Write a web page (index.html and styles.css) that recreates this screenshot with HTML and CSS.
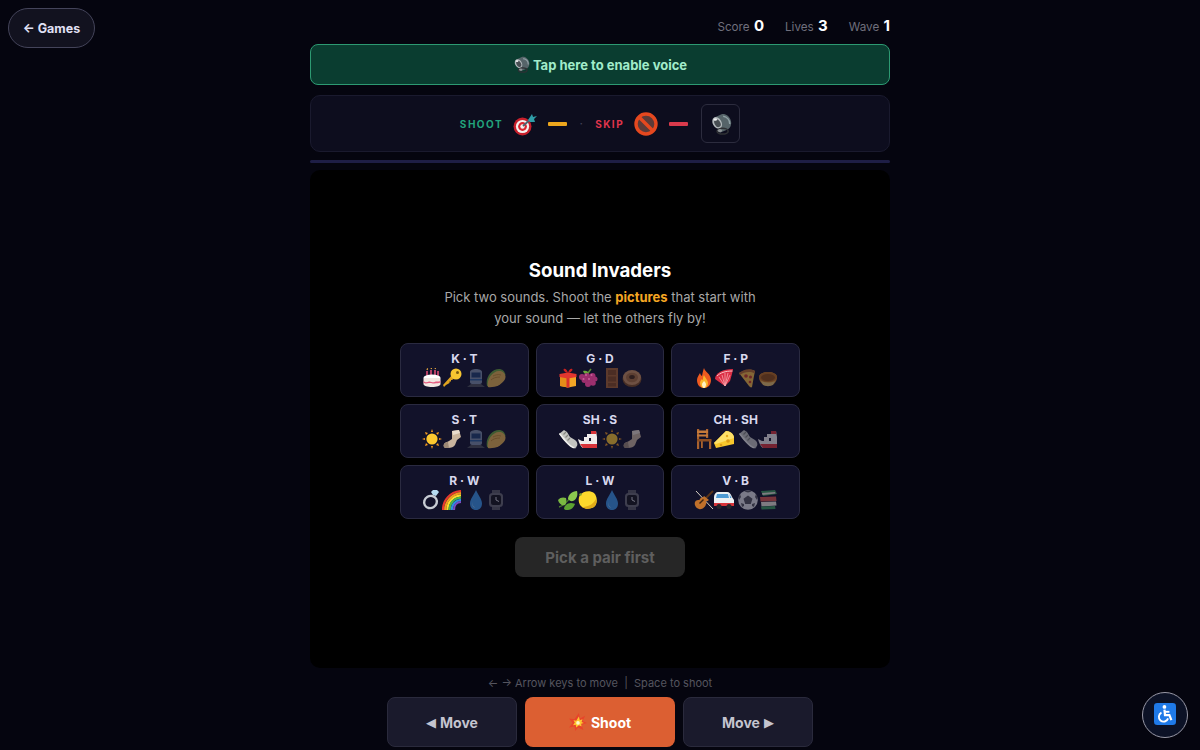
FILE: index.html
```html
<!DOCTYPE html>
<html lang="en">
<head>
    <meta charset="UTF-8">
    <meta name="viewport" content="width=device-width, initial-scale=1.0">
    <title>Sound Invaders</title>
    <link rel="stylesheet" href="styles.css">
</head>
<body>
    <svg class="sprites" xmlns="http://www.w3.org/2000/svg">
        <symbol id="speaker" viewBox="0 0 20 20">
            <path d="M4 4l7-3c3-.5 7 2 8 6s-1 7-3 8l-7 3z" fill="#566469"/>
            <path d="M12 3c3 .5 6 3 6 7" stroke="#8fa0a5" stroke-width="1.400" fill="none"/>
            <ellipse cx="6.500" cy="9" rx="4" ry="5.600" transform="rotate(-30 6.500 9)" fill="#b4babd"/>
            <ellipse cx="6.800" cy="9.300" rx="2.600" ry="3.800" transform="rotate(-30 6.800 9.300)" fill="#474d52"/>
            <ellipse cx="4.800" cy="6" rx="1.600" ry="1.100" fill="#f0f1f2"/>
            <ellipse cx="11.500" cy="16.500" rx="5" ry="2.600" fill="none" stroke="#2e3034" stroke-width="1.500"/>
            <ellipse cx="9" cy="16" rx="2" ry="1.400" fill="#8f9497"/>
        </symbol>
        <symbol id="target" viewBox="0 0 24 24">
            <circle cx="9.500" cy="14.500" r="9" fill="#c8202c"/>
            <circle cx="9.500" cy="14.500" r="6.600" fill="#f5f0ee"/>
            <circle cx="9.500" cy="14.500" r="4.400" fill="#d9252f"/>
            <circle cx="9.500" cy="14.500" r="2.200" fill="#f5f0ee"/>
            <path d="M10 14L20 5" stroke="#4d6470" stroke-width="1.800"/>
            <path d="M15 8l4-6 1 3 4-1-3 3 1 3-5 0z" fill="#2f9ea8"/>
        </symbol>
        <symbol id="noentry" viewBox="0 0 24 24">
            <circle cx="12" cy="12" r="10" fill="#5c3b38" stroke="#e5481f" stroke-width="3.400"/>
            <path d="M5 5l14 14" stroke="#e5481f" stroke-width="3.400"/>
        </symbol>
        <symbol id="cake" viewBox="0 0 20 20">
            <path d="M5 3v6M9 2v7M13 2v7M16 3v6" stroke="#e8507a" stroke-width="1.500"/>
            <path d="M5 2l.6-1.600M9 1l.6-1M13 1l.6-1" stroke="#f5b342" stroke-width="1.200"/>
            <ellipse cx="10" cy="9.500" rx="8.500" ry="3" fill="#fff"/>
            <path d="M1.500 10v6c0 1.800 3.800 3 8.500 3s8.500-1.200 8.500-3v-6z" fill="#f1e7e2"/>
            <path d="M1.500 13c2 2 4 1 5.500.5s4 1.500 5.500.5 4 0 6-1v1.500c-2 1-4 .5-6 1s-3-1-5.500-.5-3.500 1-5.500-.5z" fill="#e45b7f"/>
        </symbol>
        <symbol id="key" viewBox="0 0 20 20">
            <path d="M2 19l-1-2L11 6l3 3-2 2-1-.5-.5 1.500-1.500 0 0 1.500-1.500 0 0 1.500L4 17z" fill="#e0a31f"/>
            <circle cx="14" cy="6" r="5.500" fill="#f7c531"/>
            <circle cx="15.500" cy="4.500" r="1.500" fill="#7a5a10"/>
        </symbol>
        <symbol id="train" viewBox="0 0 20 20">
            <path d="M4 4c0-2 3-3 6-3s6 1 6 3v10c0 1-1 2-2 2H6c-1 0-2-1-2-2z" fill="#7e8fa8"/>
            <path d="M5.500 4.500h9v5h-9z" fill="#1f3f6e"/>
            <path d="M4 11h12v1.500H4z" fill="#2b5d9b"/>
            <path d="M1 19l4-3h10l4 3z" fill="#4c4f57"/>
        </symbol>
        <symbol id="taco" viewBox="0 0 20 20">
            <path d="M1 18C-1 9 6 1 13 1c3 0 6 2 6.500 6-4 1-9 4-12 11-2 1-5 1-6.500 0z" fill="#6aa33a"/>
            <path d="M2 19C0 11 7 3 13 3c3.500 0 6 2 6.500 5.500.5 4-6 9.500-11 10.300-2.500.4-5 .7-6.500.2z" fill="#e6b24f"/>
            <path d="M7 8c2-1 5-2 8-1M5 12c2-2 5-3 9-3" stroke="#bd8428" stroke-width=".9" fill="none"/>
        </symbol>
        <symbol id="gift" viewBox="0 0 20 20">
            <path d="M2 7l8-1 8 1v11l-8 1.500L2 18z" fill="#f2a526"/>
            <path d="M2 7l8 1.500V19.500L2 18z" fill="#e58c19"/>
            <path d="M8.500 6.500h3v13h-3z" fill="#d9302c"/>
            <path d="M1.500 6l8.500-1.500L18.500 6v3L10 10.500 1.500 9z" fill="#e2362f"/>
            <path d="M10 5C7 5 4.500 1.500 6 .8S9.500 2.500 10 5c.5-2.500 2.500-4.900 4-4.200S13 5 10 5z" fill="#c9201f"/>
        </symbol>
        <symbol id="grapes" viewBox="0 0 20 20">
            <path d="M10 5l3-4" stroke="#5a8d33" stroke-width="1.500"/>
            <path d="M5 3c3-1 5 0 6 3-3 1-5 0-6-3z" fill="#6ba83c"/>
            <g fill="#9c2f6e">
                <circle cx="4" cy="9" r="3"/><circle cx="9" cy="8" r="3"/><circle cx="14.500" cy="8" r="3"/><circle cx="17" cy="11" r="2.500"/>
                <circle cx="6.500" cy="12" r="3"/><circle cx="12" cy="12" r="3"/><circle cx="15" cy="15" r="2.800"/>
                <circle cx="10" cy="16" r="3"/>
            </g>
            <g fill="#c95f9a"><circle cx="8" cy="7" r="1"/><circle cx="13.500" cy="7" r="1"/><circle cx="5.500" cy="11" r="1"/><circle cx="11" cy="11" r="1"/></g>
        </symbol>
        <symbol id="door" viewBox="0 0 20 20">
            <path d="M4 0h12v20H4z" fill="#a8632f"/>
            <path d="M6 2h8v5H6zM6 8.500h8v5H6zM6 15h8v3.500H6z" fill="#84491f"/>
        </symbol>
        <symbol id="donut" viewBox="0 0 20 20">
            <ellipse cx="10" cy="11" rx="9.500" ry="8" fill="#7c4a22"/>
            <ellipse cx="10" cy="9.500" rx="9" ry="7.500" fill="#c98f5c"/>
            <ellipse cx="10" cy="9.500" rx="6" ry="4.800" fill="#a86c3a"/>
            <ellipse cx="10" cy="9" rx="2.800" ry="2" fill="#4a2a14"/>
        </symbol>
        <symbol id="fire" viewBox="0 0 20 20">
            <path d="M10 0c1 4 7 6 7 12 0 5-3 8-7 8s-7-3-7-8c0-3 2-5 3-7 .5 1.500 1 2.500 2 3 .5-3 1-5 2-8z" fill="#ef5a1f"/>
            <path d="M10 7c1 3 4 5 4 8 0 3-2 5-4 5s-4-2-4-5c0-2 1-3 2-4 .5 1 1 1 1 1 0-2 0-3 1-5z" fill="#fbb62b"/>
            <path d="M10 13c1 1 2 2 2 3.500S11 20 10 20s-2-2-2-3.500 1-2 2-3.500z" fill="#fff3c4"/>
        </symbol>
        <symbol id="fan" viewBox="0 0 20 20">
            <path d="M1 11C1 5 9 1 19 1l-1 5-2 7-5 5-3-2z" fill="#dc2f45"/>
            <path d="M11 18L5 9M11 18L8 7M11 18l0-13M11 18l3-13M11 18l5-11" stroke="#f6a5ac" stroke-width=".8"/>
            <path d="M3 8C6 5 11 3 18.500 3" stroke="#f7c0c4" stroke-width="1" fill="none"/>
        </symbol>
        <symbol id="pizza" viewBox="0 0 20 20">
            <path d="M1 5c5-3 10-4 14-3l2 1-1 5-2 11c-1 1-2 0-3-1z" fill="#f5b942"/>
            <path d="M1 5c5-4 11-5 16-2l-.5 2.500C12 3 6 4 1.800 7z" fill="#b86b2a"/>
            <circle cx="8" cy="8" r="1.800" fill="#cb3a26"/><circle cx="12.500" cy="9" r="1.500" fill="#cb3a26"/><circle cx="12" cy="14" r="1.300" fill="#cb3a26"/>
        </symbol>
        <symbol id="pie" viewBox="0 0 20 20">
            <path d="M1 9c0-3 4-5 9-5s9 2 9 5c0 5-4 9-9 9s-9-4-9-9z" fill="#d98b27"/>
            <ellipse cx="10" cy="9" rx="9" ry="5" fill="#b86a1c"/>
            <ellipse cx="10" cy="9.500" rx="7" ry="3.500" fill="#8e4c12"/>
            <path d="M3 13c4 2 10 2 14 0l-2 4c-3 1.500-7 1.500-10 0z" fill="#e7c06a"/>
        </symbol>
        <symbol id="sun" viewBox="0 0 20 20">
            <circle cx="10" cy="10" r="5.600" fill="#fdc82f"/>
            <path d="M10 0l1 3H9zM10 20l-1-3h2zM0 10l3-1v2zM20 10l-3 1V9zM3 3l3 1-2 2zM17 17l-3-1 2-2zM17 3l-1 3-2-2zM3 17l1-3 2 2z" fill="#f79a1e"/>
        </symbol>
        <symbol id="sock" viewBox="0 0 20 20">
            <path d="M10 2l7-1 2 7-4 3-2 5c-1 2-4 3-7 3H4c-2 0-3-2-2-4 1-1.500 3-2 5-3l3-2z" fill="#c9b49d"/>
            <path d="M10 2l7-1 1 3-7 2z" fill="#e8dccd"/>
            <path d="M2 15c1-1.500 3-2 4-2l1 6H4c-2 0-3-2-2-4z" fill="#9c8874"/>
        </symbol>
        <symbol id="shoe" viewBox="0 0 20 20">
            <path d="M1 5l5-4 3 2 3 5 5 3c2 1.500 3 4 2 6-1 1.500-3 2-5 1-3-1.500-6-5-9-8z" fill="#c3c4c0"/>
            <path d="M1 5l4.500 6c3 3.500 6 6.800 9 8 1.500.6 3 .5 4-.5-3 0-6-2-9-5.500L2 4z" fill="#f0f0ec"/>
            <path d="M8 3L5.500 5.500M10 6L7.500 8.500M12 9l-2.500 2.500" stroke="#85867f" stroke-width="1.200"/>
        </symbol>
        <symbol id="ship" viewBox="0 0 20 20">
            <path d="M0 10l4 2h9V2h5l1 6v11H5c-2-1-4-5-5-9z" fill="#f0eceb"/>
            <path d="M6 8h5v4H6zM9 5h4v4H9z" fill="#f0eceb"/>
            <path d="M2 15h17v4H5z" fill="#d8343a"/>
            <path d="M13 2h5l.4 3H13z" fill="#d8343a"/>
        </symbol>
        <symbol id="chair" viewBox="0 0 20 20">
            <path d="M3 0h2.200v20H3zM12 0h2.200v9H12zM15 11h2.200v9H15zM7 12h1.800v7H7z" fill="#a9622e"/>
            <path d="M3 1.500h11v2.500H3zM3 5.500h11v2H3z" fill="#c57a3a"/>
            <path d="M3 10h14.500v2.500H3z" fill="#8b4d22"/>
        </symbol>
        <symbol id="cheese" viewBox="0 0 20 20">
            <path d="M0 14L12 2c4 0 8 3 8 7v6L2 19z" fill="#f8c72c"/>
            <path d="M0 14L12 2c4 0 8 3 8 7L2 15z" fill="#fde068"/>
            <circle cx="14" cy="12" r="1.800" fill="#dd9d16"/><circle cx="7" cy="16" r="1.300" fill="#dd9d16"/><circle cx="13" cy="7" r="1.200" fill="#e3a91e"/>
        </symbol>
        <symbol id="ring" viewBox="0 0 20 20">
            <path d="M11 0h4l2 2-3 4-3-1-2-3z" fill="#b6dcf2"/>
            <ellipse cx="8.500" cy="12" rx="6.500" ry="6" fill="none" stroke="#c7ccd4" stroke-width="2.400" transform="rotate(-30 8.500 12)"/>
        </symbol>
        <symbol id="rainbow" viewBox="0 0 20 20">
            <g fill="none" stroke-width="2.200">
                <path d="M1 20C1 10 8 2 19 1" stroke="#e5392f"/>
                <path d="M3.200 20C3.200 11 10 4 19 3.200" stroke="#f49a1f"/>
                <path d="M5.400 20C5.400 12 11 6 19 5.400" stroke="#fbdc2c"/>
                <path d="M7.600 20C7.600 13 12 8 19 7.600" stroke="#4bb54a"/>
                <path d="M9.800 20C9.800 14 14 10 19 9.800" stroke="#2d8fe0"/>
                <path d="M12 20C12 15 15 12 19 12" stroke="#7b4bc4"/>
            </g>
        </symbol>
        <symbol id="drop" viewBox="0 0 20 20">
            <path d="M10 0c2 5 6 9 6 13.500S13 20 10 20s-6-2-6-6.500S8 5 10 0z" fill="#3a96ea"/>
            <path d="M7 12c-1 3 .5 5 2.500 5.500C7 18 5.500 15 7 12z" fill="#9ad0f6"/>
        </symbol>
        <symbol id="watch" viewBox="0 0 20 20">
            <path d="M6 0h8v4H6zM6 16h8v4H6z" fill="#5a5a62"/>
            <rect x="3" y="3" width="14" height="14" rx="3.500" fill="#6a6a72"/>
            <rect x="5" y="5" width="10" height="10" rx="2" fill="#15151a"/>
            <path d="M10 10V7M10 10l3 1.500" stroke="#d5d5da" stroke-width="1"/>
        </symbol>
        <symbol id="leaf" viewBox="0 0 20 20">
            <path d="M1 17c4-1 8-4 13-12" stroke="#4a7d2b" stroke-width="1.300" fill="none"/>
            <path d="M0 10c2-3 6-3 8-2 1 3 0 6-1 7-3 1-6-1-7-5z" fill="#7bb942"/>
            <path d="M6 19c0-3 3-6 7-6 2 0 4 1 4 1-1 3-4 6-7 6-2 0-3 0-4-1z" fill="#5da232"/>
            <path d="M10 9c0-4 4-8 9-8 1 4 0 8-4 10-2 .5-4-.5-5-2z" fill="#8cc84f"/>
        </symbol>
        <symbol id="lemon" viewBox="0 0 20 20">
            <path d="M2 5C5 1 12 0 16 3c3 3 4 9 1 13-3 3-9 4-13 1C0 14 0 8 2 5z" fill="#fcd92c"/>
            <path d="M17 16c-3 3-9 4-13 1 5 0 11-2 14-8 .8 2 .4 5-1 7z" fill="#e0ab18"/>
            <path d="M1 4l2-1 1 2-2 1z" fill="#83a531"/>
        </symbol>
        <symbol id="violin" viewBox="0 0 20 20">
            <path d="M2 1l17 18" stroke="#d9d1c5" stroke-width="1"/>
            <path d="M19 1l-8 8" stroke="#5a3418" stroke-width="2"/>
            <path d="M10 6l5 4c-1 1-2 1-3 1 0 1 1 2 0 3-.5 3-4 6-7 5s-5-4-4-7c1-2 3-2 4-2 1 0 1-2 2-2 1-1 2 0 3-2z" fill="#c0702a"/>
            <path d="M5 13l4-4 1 1-4 4z" fill="#3e2410"/>
        </symbol>
        <symbol id="van" viewBox="0 0 20 20">
            <path d="M0 7c0-3 2-5 4-5h9c2.500 0 4 2 5 5l2 3v6H0z" fill="#eef1f3"/>
            <path d="M3 4h11l1 4H2z" fill="#4f9bd4"/>
            <path d="M15.500 4l2 4h-1.500z" fill="#4f9bd4"/>
            <path d="M0 13h20v3H0z" fill="#d8343a"/>
            <circle cx="5" cy="16.500" r="2.500" fill="#25252a"/><circle cx="15" cy="16.500" r="2.500" fill="#25252a"/>
        </symbol>
        <symbol id="ball" viewBox="0 0 20 20">
            <circle cx="10" cy="10" r="9.800" fill="#e2e2e6"/>
            <path d="M10 5.500l4.500 3.200-1.700 5.300H7.200L5.500 8.700zM6 1.500l4 1 4-1-4-1zM1 10l2-3-1-3-1 2zM19 10l-2-3 1-3 1 2zM4 17l2-1 0-2-3-1zM16 17l-2-1 0-2 3-1z" fill="#55555c"/>
        </symbol>
        <symbol id="books" viewBox="0 0 20 20">
            <path d="M3 1l14-1 2 4-14 2z" fill="#3c9a5c"/>
            <path d="M4 3l13-1 .5 1.500-13 1.500z" fill="#e9e4d8"/>
            <path d="M2 7l16-.5.500 4.500-16 .5z" fill="#d9574c"/>
            <path d="M3 12l15-.5.500 4-15 1z" fill="#e9e4d8"/>
            <path d="M3 16.500l14-.5.500 3-14 .5z" fill="#3c9a5c"/>
        </symbol>
        <symbol id="boom" viewBox="0 0 20 20">
            <path d="M11 0l1 6 6-3-3 6 5 2-6 2 2 6-6-3-3 4-1-5-6 1 4-5-4-5 6 1z" fill="#e8442a"/>
            <path d="M11 4l1 4 3-1-1 3 2.500 1-3 1 .5 3-3-1.500L8 16l-.5-3-3 .5 2-3L5 8l3 .5z" fill="#fdc72f"/>
            <circle cx="10" cy="11" r="2" fill="#fff7d0"/>
        </symbol>
        <symbol id="wheelchair" viewBox="0 0 20 20">
            <rect width="20" height="20" rx="3" fill="#1f7ae8"/>
            <circle cx="9.500" cy="3.600" r="1.700" fill="#fff"/>
            <path d="M9.500 6l.5 5h4l1.800 4.500" stroke="#fff" stroke-width="2" fill="none"/>
            <path d="M10 8h4" stroke="#fff" stroke-width="1.700"/>
            <path d="M6.800 8.800a4.300 4.300 0 1 0 6 5.200" stroke="#fff" stroke-width="1.700" fill="none"/>
        </symbol>
    </svg>

    <a class="back-btn" href="#">← Games</a>

    <div class="game">
        <div class="stats">
            <span class="stat">Score <b>0</b></span>
            <span class="stat">Lives <b>3</b></span>
            <span class="stat">Wave <b>1</b></span>
        </div>

        <div class="voice-banner">
            <svg class="emoji"><use href="#speaker"/></svg>
            <span>Tap here to enable voice</span>
        </div>

        <div class="legend">
            <span class="legend-label shoot">SHOOT</span>
            <svg class="legend-icon"><use href="#target"/></svg>
            <span class="dash dash-shoot"></span>
            <span class="legend-dot">·</span>
            <span class="legend-label skip">SKIP</span>
            <svg class="legend-icon"><use href="#noentry"/></svg>
            <span class="dash dash-skip"></span>
            <button class="sound-btn"><svg class="emoji big"><use href="#speaker"/></svg></button>
        </div>

        <div class="progress"></div>

        <div class="canvas">
            <h2 class="title">Sound Invaders</h2>
            <p class="intro">Pick two sounds. Shoot the <b>pictures</b> that start with<br>your sound — let the others fly by!</p>

            <div class="pairs">
                <div class="pair">
                    <div class="pair-name">K · T</div>
                    <div class="pair-pics">
                        <svg class="pic"><use href="#cake"/></svg><svg class="pic"><use href="#key"/></svg>
                        <span class="dim"><svg class="pic"><use href="#train"/></svg><svg class="pic"><use href="#taco"/></svg></span>
                    </div>
                </div>
                <div class="pair">
                    <div class="pair-name">G · D</div>
                    <div class="pair-pics">
                        <svg class="pic"><use href="#gift"/></svg><svg class="pic"><use href="#grapes"/></svg>
                        <span class="dim"><svg class="pic"><use href="#door"/></svg><svg class="pic"><use href="#donut"/></svg></span>
                    </div>
                </div>
                <div class="pair">
                    <div class="pair-name">F · P</div>
                    <div class="pair-pics">
                        <svg class="pic"><use href="#fire"/></svg><svg class="pic"><use href="#fan"/></svg>
                        <span class="dim"><svg class="pic"><use href="#pizza"/></svg><svg class="pic"><use href="#pie"/></svg></span>
                    </div>
                </div>
                <div class="pair">
                    <div class="pair-name">S · T</div>
                    <div class="pair-pics">
                        <svg class="pic"><use href="#sun"/></svg><svg class="pic"><use href="#sock"/></svg>
                        <span class="dim"><svg class="pic"><use href="#train"/></svg><svg class="pic"><use href="#taco"/></svg></span>
                    </div>
                </div>
                <div class="pair">
                    <div class="pair-name">SH · S</div>
                    <div class="pair-pics">
                        <svg class="pic"><use href="#shoe"/></svg><svg class="pic"><use href="#ship"/></svg>
                        <span class="dim"><svg class="pic"><use href="#sun"/></svg><svg class="pic"><use href="#sock"/></svg></span>
                    </div>
                </div>
                <div class="pair">
                    <div class="pair-name">CH · SH</div>
                    <div class="pair-pics">
                        <svg class="pic"><use href="#chair"/></svg><svg class="pic"><use href="#cheese"/></svg>
                        <span class="dim"><svg class="pic"><use href="#shoe"/></svg><svg class="pic"><use href="#ship"/></svg></span>
                    </div>
                </div>
                <div class="pair">
                    <div class="pair-name">R · W</div>
                    <div class="pair-pics">
                        <svg class="pic"><use href="#ring"/></svg><svg class="pic"><use href="#rainbow"/></svg>
                        <span class="dim"><svg class="pic"><use href="#drop"/></svg><svg class="pic"><use href="#watch"/></svg></span>
                    </div>
                </div>
                <div class="pair">
                    <div class="pair-name">L · W</div>
                    <div class="pair-pics">
                        <svg class="pic"><use href="#leaf"/></svg><svg class="pic"><use href="#lemon"/></svg>
                        <span class="dim"><svg class="pic"><use href="#drop"/></svg><svg class="pic"><use href="#watch"/></svg></span>
                    </div>
                </div>
                <div class="pair">
                    <div class="pair-name">V · B</div>
                    <div class="pair-pics">
                        <svg class="pic"><use href="#violin"/></svg><svg class="pic"><use href="#van"/></svg>
                        <span class="dim"><svg class="pic"><use href="#ball"/></svg><svg class="pic"><use href="#books"/></svg></span>
                    </div>
                </div>
            </div>

            <button class="start-btn" disabled>Pick a pair first</button>
        </div>

        <div class="hint">← → Arrow keys to move &nbsp;|&nbsp; Space to shoot</div>

        <div class="controls">
            <button class="ctrl move"><span class="tri">◀</span> Move</button>
            <button class="ctrl fire"><svg class="emoji boom"><use href="#boom"/></svg> Shoot</button>
            <button class="ctrl move">Move <span class="tri">▶</span></button>
        </div>
    </div>

    <button class="a11y-btn"><svg class="a11y-icon"><use href="#wheelchair"/></svg></button>
</body>
</html>
```

FILE: styles.css
```css
* {
    box-sizing: border-box;
}

html, body {
    height: 100%;
}

body {
    margin: 0;
    background-color: #05050f;
    color: #fff;
    font-family: Inter, "Liberation Sans", sans-serif;
    overflow: hidden;
}

.sprites {
    display: none;
}

.back-btn {
    position: absolute;
    left: 8px;
    top: 8px;
    width: 87px;
    height: 40px;
    display: flex;
    align-items: center;
    justify-content: center;
    border: 1px solid #44445a;
    border-radius: 20px;
    background: #12121f;
    color: #e0e0f5;
    font-size: 12.5px;
    font-weight: 700;
    text-decoration: none;
}

.game {
    width: 580px;
    margin: 0 auto;
    display: flex;
    flex-direction: column;
}

.stats {
    height: 44px;
    padding-top: 17px;
    display: flex;
    justify-content: flex-end;
    gap: 21px;
    font-size: 11.7px;
    line-height: 18px;
    color: #6f6f7c;
}

.stat b {
    margin-left: 1px;
    font-size: 15px;
    font-weight: 700;
    color: #fff;
}

.voice-banner {
    height: 41px;
    display: flex;
    align-items: center;
    justify-content: center;
    gap: 3px;
    border: 1px solid #2d9a72;
    border-radius: 8px;
    background: #0a3d30;
    color: #a2ecca;
    font-size: 13px;
    font-weight: 700;
}

.emoji {
    width: 17px;
    height: 17px;
}

.emoji.big {
    display: block;
    width: 22px;
    height: 22px;
}

.emoji.boom {
    width: 18px;
    height: 18px;
}

.legend {
    height: 57px;
    margin-top: 10px;
    display: flex;
    align-items: center;
    justify-content: center;
    border: 1px solid #1a1a2e;
    border-radius: 10px;
    background: #0d0d1e;
}

.legend-label {
    font-size: 10px;
    font-weight: 700;
    letter-spacing: 1.5px;
}

.legend-label.shoot {
    color: #22a37c;
}

.legend-label.skip {
    color: #e0354c;
}

.legend-icon {
    width: 24px;
    height: 24px;
    margin: 0 11px 0 10px;
}

.dash {
    width: 19px;
    height: 4px;
    border-radius: 1px;
}

.dash-shoot {
    background: #eda61d;
}

.dash-skip {
    background: #d93a4c;
}

.legend-dot {
    width: 28px;
    text-align: center;
    font-size: 12px;
    color: #44445a;
}

.sound-btn {
    width: 39px;
    height: 39px;
    margin-left: 13px;
    padding: 0;
    display: flex;
    align-items: center;
    justify-content: center;
    border: 1px solid #2c2c3e;
    border-radius: 6px;
    background: #0d0d1e;
}

.progress {
    height: 3px;
    margin-top: 8px;
    border-radius: 2px;
    background: #1e1e46;
}

.canvas {
    height: 498px;
    margin-top: 7px;
    padding-top: 89px;
    display: flex;
    flex-direction: column;
    align-items: center;
    border-radius: 10px;
    background: #000;
}

.title {
    margin: 0;
    font-size: 18.7px;
    line-height: 24px;
    font-weight: 700;
    color: #fff;
}

.intro {
    margin: 4px 0 0;
    text-align: center;
    font-size: 13px;
    line-height: 21px;
    color: #a8a8a8;
}

.intro b {
    color: #f5a623;
    font-weight: 700;
}

.pairs {
    width: 400px;
    margin-top: 14px;
    display: grid;
    grid-template-columns: repeat(3, 1fr);
    gap: 7px;
}

.pair {
    height: 54px;
    padding-top: 8px;
    border: 1px solid #2a2a40;
    border-radius: 8px;
    background: #12122a;
    text-align: center;
}

.pair-name {
    font-size: 12px;
    line-height: 14px;
    font-weight: 700;
    color: #d8d8ee;
}

.pair-pics {
    margin-top: 2px;
    display: flex;
    justify-content: center;
    align-items: center;
}

.pic {
    width: 20px;
    height: 20px;
    display: block;
}

.dim {
    display: flex;
    margin-left: 4px;
    opacity: 0.5;
}

.start-btn {
    width: 170px;
    height: 40px;
    margin-top: 18px;
    border: 0;
    border-radius: 8px;
    background: #262626;
    color: #5f5f5f;
    font-family: inherit;
    font-size: 15px;
    font-weight: 700;
}

.hint {
    margin-top: 8px;
    text-align: center;
    font-size: 11px;
    line-height: 14px;
    color: #55555f;
}

.controls {
    margin-top: 7px;
    display: flex;
    justify-content: center;
    gap: 8px;
}

.ctrl {
    height: 50px;
    display: flex;
    align-items: center;
    justify-content: center;
    gap: 4px;
    border-radius: 8px;
    font-family: inherit;
    font-size: 14px;
    font-weight: 700;
}

.ctrl.move {
    width: 130px;
    border: 1px solid #2a2a3c;
    background: #1a1a2c;
    color: #c4c4cf;
}

.ctrl.fire {
    width: 150px;
    border: 0;
    background: #dc5f32;
    color: #fff;
}

.tri {
    font-family: "DejaVu Sans", sans-serif;
    font-size: 13px;
}

.a11y-btn {
    position: fixed;
    right: 12px;
    bottom: 12px;
    width: 46px;
    height: 46px;
    padding: 0 0 2px;
    display: flex;
    align-items: center;
    justify-content: center;
    border: 1px solid #9a9aa8;
    border-radius: 50%;
    background: #0c1226;
}

.a11y-icon {
    width: 22px;
    height: 22px;
}
```
